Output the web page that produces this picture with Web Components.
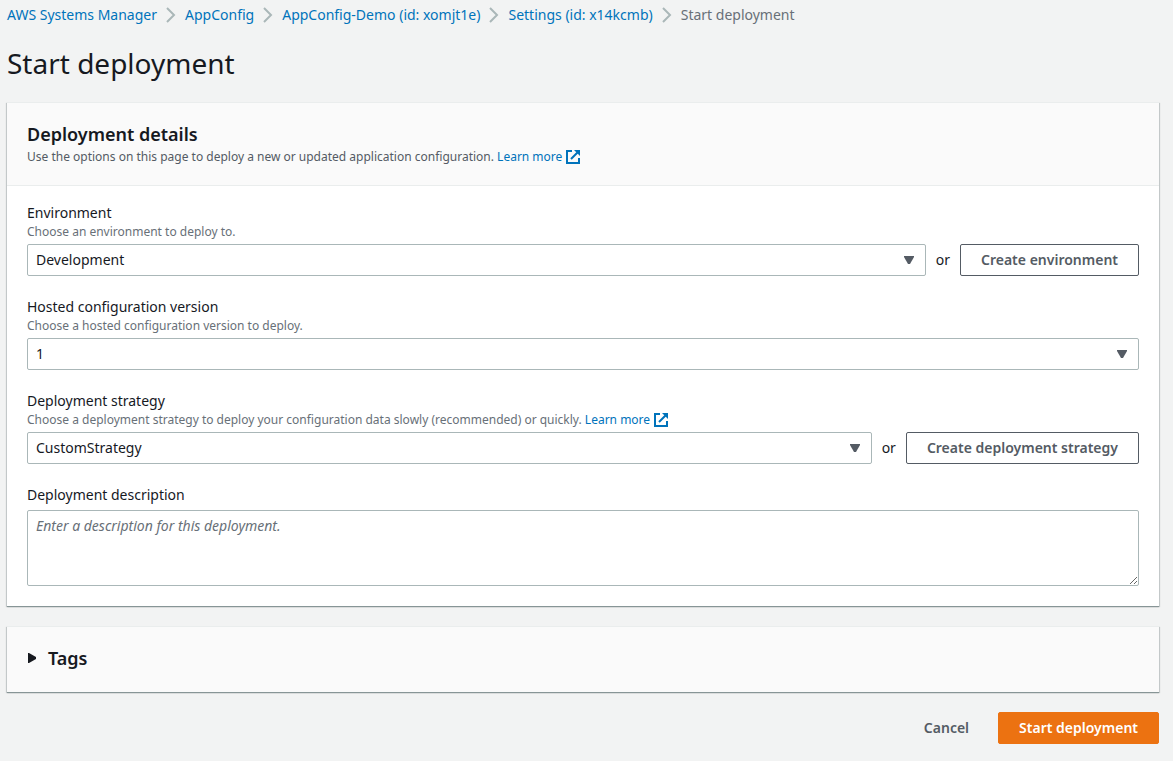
<!DOCTYPE html>
<html lang="en">
<head>
<meta charset="utf-8">
<title>Start deployment</title>
<style>
  body {
    margin: 0;
    background: #f2f3f3;
    color: #16191f;
    font: 14px/22px "Noto Sans", "Open Sans", sans-serif;
  }
</style>
</head>
<body>
<deployment-page></deployment-page>

<script>
const define = (name, html, setup) => {
  const template = document.createElement('template');
  template.innerHTML = html;
  customElements.define(name, class extends HTMLElement {
    constructor() {
      super();
      this.attachShadow({ mode: 'open' }).append(template.content.cloneNode(true));
    }
    connectedCallback() {
      if (setup && !this.ready) setup(this, this.shadowRoot);
      this.ready = true;
    }
  });
};

define('crumb-link', `
  <style>
    :host { display: flex; align-items: center; }
    a { color: #0073bb; text-decoration: none; }
    a:hover { text-decoration: underline; }
    svg { margin: 0 9px; }
  </style>
  <a href="#"><slot></slot></a>
  <svg width="10" height="16" viewBox="0 0 10 16" fill="none" stroke="#aab7b8" stroke-width="2" aria-hidden="true"><path d="M1 1l7 7-7 7"/></svg>
`);

define('external-link', `
  <style>
    :host { display: inline; }
    a { color: #0073bb; text-decoration: none; }
    svg { margin-left: 4px; vertical-align: -3px; }
  </style>
  <a href="#"><slot></slot><svg width="14" height="14" viewBox="0 0 14 14" fill="none" stroke="#0073bb" stroke-width="2" role="img" aria-label="Opens in a new tab"><path d="M6 1H1v12h12V8M12 2L5 9"/><path d="M8 0h6v6z" fill="#0073bb" stroke="none"/></svg></a>
`);

define('action-button', `
  <style>
    :host { display: block; flex: none; }
    button {
      display: block; box-sizing: border-box; height: 32px; padding: 0 20px;
      border: 1px solid #545b64; border-radius: 2px; background: #fff; color: #545b64;
      font: inherit; font-weight: 600; cursor: pointer; white-space: nowrap;
    }
    :host([variant=link]) button { border-color: transparent; background: none; }
    :host([variant=primary]) button { border-color: #ec7211; background: #ec7211; color: #fff; }
  </style>
  <button type="button"><slot></slot></button>
`);

define('content-card', `
  <style>
    :host {
      display: block; background: #fff; border-top: 1px solid #eaeded;
      box-shadow: 0 1px 0 0 #879596, 0 1px 1px 0 rgba(0,28,36,.3), 1px 1px 1px 0 rgba(0,28,36,.15), -1px 1px 1px 0 rgba(0,28,36,.15);
      box-sizing: border-box;
    }
  </style>
  <slot></slot>
`);

define('card-header', `
  <style>
    :host { display: block; padding: 20px 20px 19px; background: #fafafa; border-bottom: 1px solid #eaeded; }
    h2 { margin: 0; font-size: 18px; line-height: 22px; font-weight: 600; }
    p { margin: 3px 0 0; color: #545b64; font-size: 12px; line-height: 18px; }
  </style>
  <h2><slot name="title"></slot></h2>
  <p><slot></slot></p>
`);

define('select-field', `
  <style>
    :host { display: block; }
    label { display: block; line-height: 22px; }
    .hint { margin-bottom: 4px; color: #687078; font-size: 12px; line-height: 16px; }
    .row { display: flex; align-items: center; gap: 10px; }
    .box { display: grid; flex: 1; align-items: center; }
    .box > * { grid-area: 1 / 1; }
    select {
      appearance: none; box-sizing: border-box; width: 100%; height: 32px; margin: 0; padding: 0 32px 0 8px;
      border: 1px solid #aab7b8; border-radius: 2px; background: #fff; color: inherit; font: inherit;
    }
    svg { justify-self: end; margin-right: 12px; pointer-events: none; }
  </style>
  <label for="control"></label>
  <div class="hint" id="hint"><slot name="hint"></slot></div>
  <div class="row">
    <div class="box">
      <select id="control" aria-describedby="hint"></select>
      <svg width="10" height="8" viewBox="0 0 10 8" aria-hidden="true"><path d="M0 0h10v1L6 8H4L0 1z" fill="#545b64"/></svg>
    </div>
    <slot></slot>
  </div>
`, (host, root) => {
  root.querySelector('label').textContent = host.getAttribute('label');
  root.querySelector('select').add(new Option(host.getAttribute('value')));
});

define('text-field', `
  <style>
    :host { display: block; }
    label { display: block; margin-bottom: 4px; line-height: 22px; }
    textarea {
      display: block; box-sizing: border-box; width: 100%; height: 76px; margin: 0; padding: 4px 8px;
      border: 1px solid #aab7b8; border-radius: 2px; background: #fff; color: inherit; font: inherit; resize: vertical;
    }
    textarea::placeholder { color: #687078; font-style: italic; }
  </style>
  <label for="control"></label>
  <textarea id="control"></textarea>
`, (host, root) => {
  root.querySelector('label').textContent = host.getAttribute('label');
  root.querySelector('textarea').placeholder = host.getAttribute('placeholder');
});

define('expandable-section', `
  <style>
    :host { display: block; background: #fafafa; }
    summary { display: flex; align-items: center; gap: 12px; padding: 19px 20px 22px; list-style: none; cursor: pointer; }
    summary::-webkit-details-marker { display: none; }
    h2 { margin: 0; font-size: 18px; line-height: 24px; font-weight: 600; }
    svg { margin-left: 1px; }
    details[open] svg { transform: rotate(90deg); }
  </style>
  <details>
    <summary>
      <svg width="8" height="10" viewBox="0 0 8 10" aria-hidden="true"><path d="M0 0h1l7 4v2l-7 4H0z" fill="#16191f"/></svg>
      <h2><slot name="title"></slot></h2>
    </summary>
    <slot></slot>
  </details>
`);

define('deployment-page', `
  <style>
    :host { display: block; padding: 5px 14px 17px 7px; }
    nav { display: flex; flex-wrap: wrap; line-height: 20px; color: #687078; }
    h1 { margin: 20px 0 21px; font-size: 28px; line-height: 36px; font-weight: 400; }
    form { display: grid; gap: 20px; }
    .fields { display: grid; gap: 20px; padding: 16px 20px 20px; }
    footer { display: flex; justify-content: flex-end; gap: 8px; }
  </style>
  <nav aria-label="Breadcrumb">
    <crumb-link>AWS Systems Manager</crumb-link>
    <crumb-link>AppConfig</crumb-link>
    <crumb-link>AppConfig-Demo (id: xomjt1e)</crumb-link>
    <crumb-link>Settings (id: x14kcmb)</crumb-link>
    <span aria-current="page">Start deployment</span>
  </nav>
  <main>
    <h1>Start deployment</h1>
    <form>
      <content-card>
        <card-header>
          <span slot="title">Deployment details</span>
          Use the options on this page to deploy a new or updated application configuration. <external-link>Learn more</external-link>
        </card-header>
        <div class="fields">
          <select-field label="Environment" value="Development">
            <span slot="hint">Choose an environment to deploy to.</span>
            <span>or</span>
            <action-button>Create environment</action-button>
          </select-field>
          <select-field label="Hosted configuration version" value="1">
            <span slot="hint">Choose a hosted configuration version to deploy.</span>
          </select-field>
          <select-field label="Deployment strategy" value="CustomStrategy">
            <span slot="hint">Choose a deployment strategy to deploy your configuration data slowly (recommended) or quickly. <external-link>Learn more</external-link></span>
            <span>or</span>
            <action-button>Create deployment strategy</action-button>
          </select-field>
          <text-field label="Deployment description" placeholder="Enter a description for this deployment."></text-field>
        </div>
      </content-card>
      <content-card>
        <expandable-section><span slot="title">Tags</span></expandable-section>
      </content-card>
      <footer>
        <action-button variant="link">Cancel</action-button>
        <action-button variant="primary">Start deployment</action-button>
      </footer>
    </form>
  </main>
`);
</script>
</body>
</html>
